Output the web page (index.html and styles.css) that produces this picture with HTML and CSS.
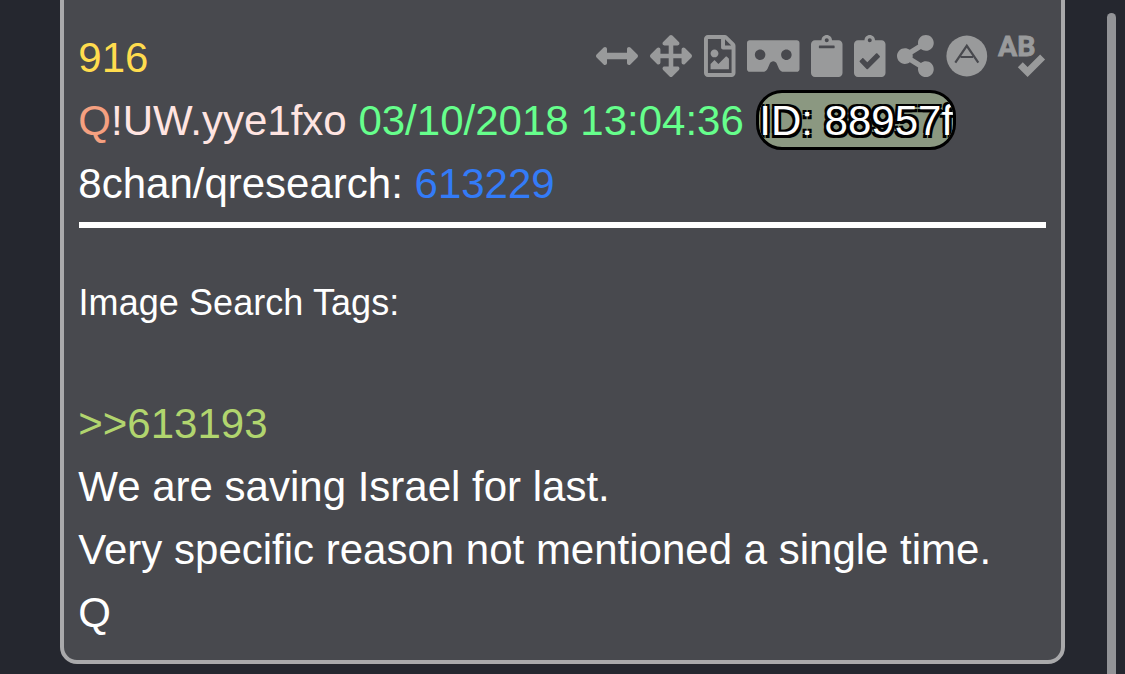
FILE: index.html
```html
<!DOCTYPE html>
<html lang="en">
<head>
<meta charset="utf-8">
<title>Post 916</title>
<link rel="stylesheet" href="styles.css">
</head>
<body>
<article class="card">
  <header class="header">
    <div class="top">
      <span class="number">916</span>
      <nav class="icons">
        <svg width="42" height="42" viewBox="0 0 512 512"><path d="M377.941 169.941V216H134.059v-46.059c0-21.382-25.851-32.09-40.971-16.971L7.029 239.029c-9.373 9.373-9.373 24.568 0 33.941l86.059 86.059c15.119 15.119 40.971 4.411 40.971-16.971V296h243.882v46.059c0 21.382 25.851 32.09 40.971 16.971l86.059-86.059c9.373-9.373 9.373-24.568 0-33.941l-86.059-86.059c-15.119-15.12-40.971-4.412-40.971 16.97z"/></svg>
        <svg width="42" height="42" viewBox="0 0 512 512"><path d="M352.201 425.775l-79.196 79.196c-9.373 9.373-24.568 9.373-33.941 0l-79.196-79.196c-15.119-15.119-4.411-40.971 16.971-40.97h51.162L228 284H127.196v51.162c0 21.382-25.851 32.09-40.971 16.971L7.029 272.937c-9.373-9.373-9.373-24.569 0-33.941L86.225 159.8c15.119-15.119 40.971-4.411 40.971 16.971V228H228V127.196h-51.23c-21.382 0-32.09-25.851-16.971-40.971l79.196-79.196c9.373-9.373 24.568-9.373 33.941 0l79.196 79.196c15.119 15.119 4.411 40.971-16.971 40.971h-51.162V228h100.804v-51.162c0-21.382 25.851-32.09 40.97-16.971l79.196 79.196c9.373 9.373 9.373 24.569 0 33.941L425.773 352.2c-15.119 15.119-40.971 4.411-40.97-16.971V284H284v100.804h51.23c21.382 0 32.09 25.851 16.971 40.971z"/></svg>
        <svg width="31.5" height="42" viewBox="0 0 384 512"><path d="M369.9 97.9L286 14C277 5 264.8-.1 252.1-.1H48C21.5 0 0 21.5 0 48v416c0 26.5 21.5 48 48 48h288c26.5 0 48-21.5 48-48V131.9c0-12.7-5.1-25-14.1-34zM332.1 128H256V51.9l76.1 76.1zM48 464V48h160v104c0 13.3 10.7 24 24 24h104v288H48zm32-48h224V288l-23.5-23.5c-4.7-4.7-12.3-4.7-17 0L176 352l-39.5-39.5c-4.7-4.7-12.3-4.7-17 0L80 352v64zm48-240c-26.5 0-48 21.5-48 48s21.5 48 48 48 48-21.5 48-48-21.5-48-48-48z"/></svg>
        <svg width="52.5" height="42" viewBox="0 0 640 512"><path d="M608 64H32C14.33 64 0 78.33 0 96v320c0 17.67 14.33 32 32 32h160.22c25.19 0 48.03-14.77 58.36-37.74l27.74-61.64C286.21 331.08 302.35 320 320 320s33.79 11.08 41.68 28.62l27.74 61.64C399.75 433.23 422.6 448 447.78 448H608c17.67 0 32-14.33 32-32V96c0-17.67-14.33-32-32-32zM160 304c-35.35 0-64-28.65-64-64s28.65-64 64-64 64 28.65 64 64-28.65 64-64 64zm320 0c-35.35 0-64-28.65-64-64s28.65-64 64-64 64 28.65 64 64-28.65 64-64 64z"/></svg>
        <svg width="31.5" height="42" viewBox="0 0 384 512"><path d="M384 112v352c0 26.51-21.49 48-48 48H48c-26.51 0-48-21.49-48-48V112c0-26.51 21.49-48 48-48h80c0-35.29 28.71-64 64-64s64 28.71 64 64h80c26.51 0 48 21.49 48 48zM192 40c-13.255 0-24 10.745-24 24s10.745 24 24 24 24-10.745 24-24-10.745-24-24-24m96 114v-20a6 6 0 0 0-6-6H102a6 6 0 0 0-6 6v20a6 6 0 0 0 6 6h180a6 6 0 0 0 6-6z"/></svg>
        <svg width="31.5" height="42" viewBox="0 0 384 512"><path d="M336 64h-80c0-35.3-28.7-64-64-64s-64 28.7-64 64H48C21.5 64 0 85.5 0 112v352c0 26.5 21.5 48 48 48h288c26.5 0 48-21.5 48-48V112c0-26.5-21.5-48-48-48zM192 40c13.3 0 24 10.7 24 24s-10.7 24-24 24-24-10.7-24-24 10.7-24 24-24zm121.2 231.8l-143 141.8c-4.7 4.7-12.3 4.6-17-.1l-82.6-83.3c-4.7-4.7-4.6-12.3.1-17L99.1 285c4.7-4.7 12.3-4.6 17 .1l46 46.4 106-105.2c4.7-4.7 12.3-4.6 17 .1l28.2 28.4c4.7 4.8 4.6 12.3-.1 17z"/></svg>
        <svg width="36.75" height="42" viewBox="0 0 448 512"><path d="M352 320c-22.608 0-43.387 7.819-59.79 20.895l-102.486-64.054a96.551 96.551 0 0 0 0-41.683l102.486-64.054C308.613 184.181 329.392 192 352 192c53.019 0 96-42.981 96-96S405.019 0 352 0s-96 42.981-96 96c0 7.158.79 14.13 2.276 20.841L155.79 180.895C139.387 167.819 118.608 160 96 160c-53.019 0-96 42.981-96 96s42.981 96 96 96c22.608 0 43.387-7.819 59.79-20.895l102.486 64.054A96.301 96.301 0 0 0 256 416c0 53.019 42.981 96 96 96s96-42.981 96-96-42.981-96-96-96z"/></svg>
        <svg width="41" height="42" viewBox="0 0 41 42"><circle cx="20.8" cy="21" r="20.4"/><path class="emblem" d="M9.3 27.6 20.8 10.8 32.3 27.6M14.6 22H27"/></svg>
        <svg width="47.25" height="42" viewBox="0 0 47.25 42"><text class="ab" x="0" y="21" textLength="37.5" lengthAdjust="spacingAndGlyphs">AB</text><path class="tick" d="M22.3 29.7 29.6 37 44.6 22"/></svg>
      </nav>
    </div>
    <div class="line"><span class="name">Q</span><span class="trip">!UW.yye1fxo</span> <time class="date">03/10/2018 13:04:36</time> <span class="id">ID: 88957f</span></div>
    <div class="line">8chan/qresearch: <span class="link">613229</span></div>
  </header>
  <div class="tags">Image Search Tags:</div>
  <div class="body">
    <div class="line reply">&gt;&gt;613193</div>
    <div class="line">We are saving Israel for last.</div>
    <div class="line">Very specific reason not mentioned a single time.</div>
    <div class="line">Q</div>
  </div>
</article>
<div class="scrollbar"></div>
</body>
</html>
```
FILE: styles.css
```css
* { box-sizing: border-box; }
body {
  margin: 0;
  height: 674px;
  overflow: hidden;
  display: flex;
  padding-left: 60px;
  background: #25272f;
  color: #fff;
  font: 42px/63px "Liberation Sans", Arial, sans-serif;
}
.card {
  width: 1005px;
  height: 684px;
  margin-top: -20px;
  padding: 42px 15px 0;
  background: #48494e;
  border: 4px solid #a9a9ab;
  border-radius: 17px;
  white-space: nowrap;
}
.header { height: 202px; border-bottom: 6px solid #fff; }
.top { display: flex; justify-content: space-between; height: 63px; text-indent: -.7px; }
.number { color: #ffdc4e; }
.icons { display: flex; gap: 11.67px; margin: 9px .4px 0 0; fill: #999a9b; text-indent: 0; }
.icons svg { display: block; overflow: visible; }
.emblem { fill: none; stroke: #48494e; stroke-width: 2.2; }
.ab { font: bold 28.5px Roboto, sans-serif; stroke: #999a9b; stroke-width: .8; }
.tick { fill: none; stroke: #999a9b; stroke-width: 7; }
.line { height: 63px; text-indent: -.7px; }
.name { color: #f5a080; }
.trip { color: #ffe4e1; }
.date { color: #66ff8c; }
.link { color: #337bf7; }
.id {
  display: inline-block;
  width: 200px;
  height: 60px;
  margin: 1px 0 0 .8px;
  line-height: 55px;
  vertical-align: top;
  border: 3px solid #000;
  border-radius: 26px;
  background: #8b9881;
  overflow: hidden;
  text-indent: 0;
  text-shadow: 2.5px 2.5px 0 #000, -2.5px 2.5px 0 #000, 2.5px -2.5px 0 #000, -2.5px -2.5px 0 #000;
}
.tags { margin-top: 48px; font-size: 36px; line-height: 54px; letter-spacing: .07px; text-indent: -.5px; }
.body { margin-top: 62px; }
.reply { color: #b1d56e; }
.scrollbar { width: 9px; height: 680px; margin: 13px 0 0 42px; border-radius: 5px; background: #929397; }
```
